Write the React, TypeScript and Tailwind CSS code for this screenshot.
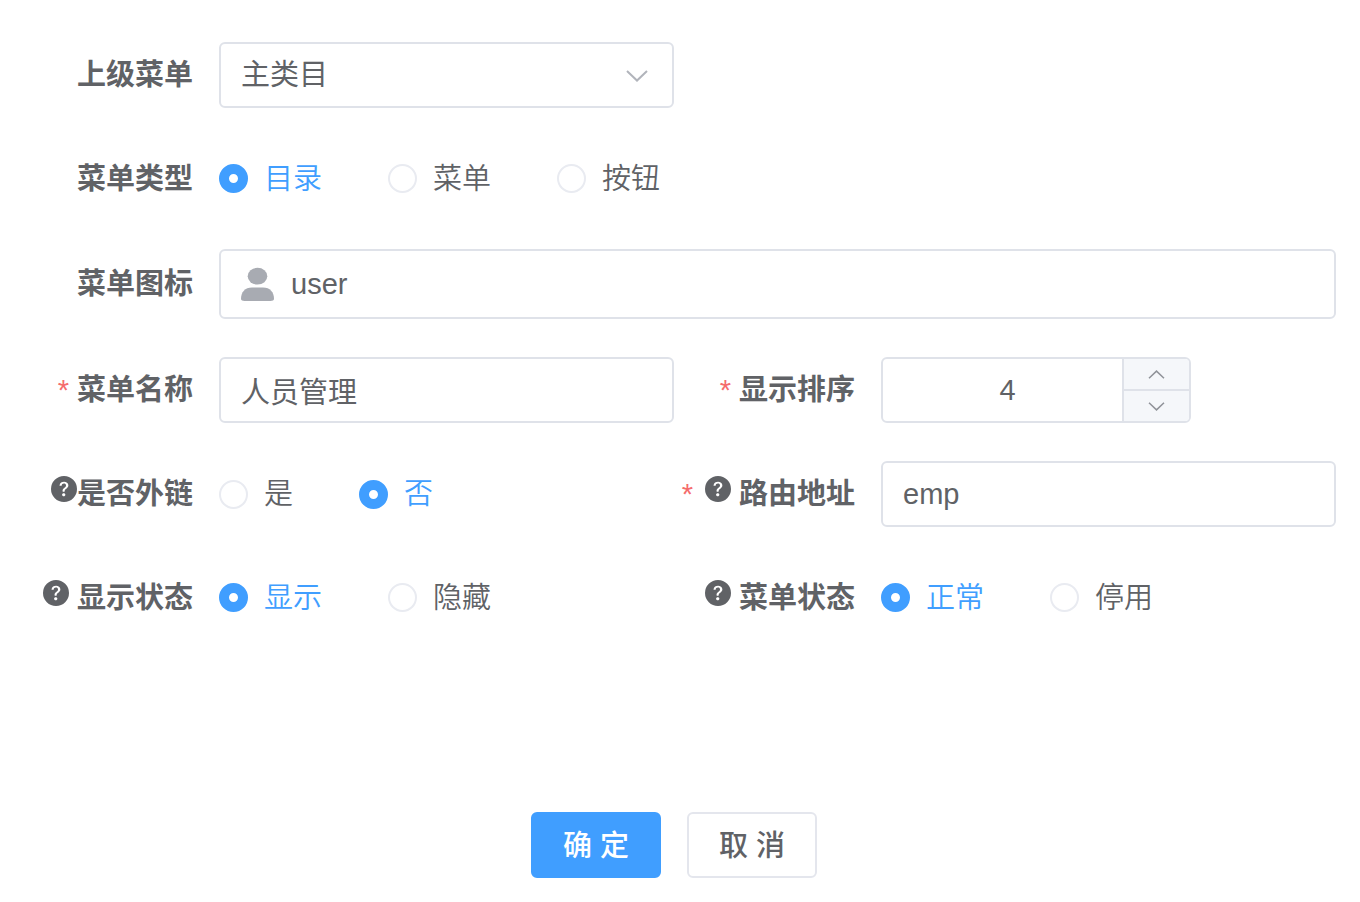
import React, { useState } from "react";

import { clsx } from "clsx";
import { BsQuestionCircleFill } from "react-icons/bs";

const inputClass =
  "h-[66px] w-full rounded-md border-2 border-[#dfe2e9] bg-white px-5 text-[29px] text-[#606266] outline-none focus:border-[#409eff]";

function Chevron({ up, className }: { up?: boolean; className?: string }) {
  return (
    <svg viewBox="0 0 22 12" fill="none" stroke="currentColor" className={className} aria-hidden="true">
      <path d={up ? "M1 11 L11 1.5 L21 11" : "M1 1 L11 10.5 L21 1"} strokeWidth="2" />
    </svg>
  );
}

function UserIcon() {
  return (
    <svg viewBox="0 0 34 34" fill="#a8abb2" className="h-[34px] w-[34px] shrink-0" aria-hidden="true">
      <ellipse cx="16.5" cy="9.2" rx="9.8" ry="8.4" />
      <path d="M0 32 C0 25 4 20.4 11 20.4 H22 C29 20.4 33 25 33 32 C33 33.2 31.5 34 29.5 34 H3.5 C1.5 34 0 33.2 0 32 Z" />
    </svg>
  );
}

type ItemProps = {
  label: string;
  htmlFor?: string;
  required?: boolean;
  help?: boolean;
  tight?: boolean;
  wide?: boolean;
  children: React.ReactNode;
};

function FormItem({ label, htmlFor, required, help, tight, wide, children }: ItemProps) {
  const Label = htmlFor ? "label" : "div";
  return (
    <div className={clsx("flex items-center", wide && "col-span-2")}>
      <Label
        htmlFor={htmlFor}
        className="flex w-[207px] shrink-0 items-center justify-end pr-[26px] font-bold whitespace-nowrap"
      >
        {required && <span className="mr-2 font-normal text-[#f56c6c]">*</span>}
        {help && (
          <BsQuestionCircleFill
            className={clsx("mb-2.5 h-[26px] w-[26px] shrink-0", required && "ml-1", !tight && "mr-2")}
          />
        )}
        <span>{label}</span>
      </Label>
      <div className="min-w-0 flex-1">{children}</div>
    </div>
  );
}

type RadioProps = {
  name: string;
  label: string;
  options: string[];
  defaultValue: string;
};

function RadioGroup({ name, label, options, defaultValue }: RadioProps) {
  const [value, setValue] = useState(defaultValue);

  return (
    <div role="radiogroup" aria-label={label} className="flex h-[65px] items-center gap-[66px] font-[350]">
      {options.map((option) => (
        <label
          key={option}
          className={clsx(
            "flex cursor-pointer items-center gap-4 whitespace-nowrap",
            value === option && "text-[#409eff]"
          )}
        >
          <input
            type="radio"
            name={name}
            value={option}
            checked={value === option}
            onChange={() => setValue(option)}
            className="h-[29px] w-[29px] shrink-0 appearance-none rounded-full border-2 border-[#e9ebf1] bg-white checked:border-10 checked:border-[#409eff]"
          />
          {option}
        </label>
      ))}
    </div>
  );
}

export default function App() {
  const [menuName, setMenuName] = useState("人员管理");
  const [icon, setIcon] = useState("user");
  const [path, setPath] = useState("emp");
  const [sort, setSort] = useState(4);

  return (
    <form
      className="pt-[42px] pr-6 pb-6 pl-3 font-['Liberation_Sans','Noto_Sans_CJK_SC',sans-serif] text-[29px] leading-10 text-[#606266]"
      onSubmit={(e) => e.preventDefault()}
    >
      <div className="grid grid-cols-2 gap-y-[38px]">
        <FormItem label="上级菜单" htmlFor="parent">
          <div className="relative">
            <select id="parent" className={clsx(inputClass, "appearance-none")}>
              <option>主类目</option>
            </select>
            <Chevron className="pointer-events-none absolute top-7 right-[26px] h-3 w-[22px] text-[#b1b4bb]" />
          </div>
        </FormItem>

        <FormItem label="菜单类型" wide>
          <RadioGroup name="type" label="菜单类型" options={["目录", "菜单", "按钮"]} defaultValue="目录" />
        </FormItem>

        <FormItem label="菜单图标" htmlFor="icon" wide>
          <div className="flex h-[70px] items-center gap-4 rounded-md border-2 border-[#dfe2e9] px-5">
            <UserIcon />
            <input
              id="icon"
              type="text"
              value={icon}
              onChange={(e) => setIcon(e.target.value)}
              className="min-w-0 flex-1 outline-none"
            />
          </div>
        </FormItem>

        <FormItem label="菜单名称" htmlFor="name" required>
          <input
            id="name"
            type="text"
            value={menuName}
            onChange={(e) => setMenuName(e.target.value)}
            className={inputClass}
          />
        </FormItem>

        <FormItem label="显示排序" htmlFor="sort" required>
          <div className="flex h-[66px] w-[310px] overflow-hidden rounded-md border-2 border-[#dfe2e9]">
            <input
              id="sort"
              type="number"
              value={sort}
              onChange={(e) => setSort(Number(e.target.value))}
              className="min-w-0 flex-1 appearance-none pl-2.5 text-center outline-none [&::-webkit-inner-spin-button]:appearance-none"
            />
            <div className="flex w-[67px] flex-col border-l-2 border-[#dfe2e9] bg-[#f5f7fa] text-[#909399]">
              <button
                type="button"
                aria-label="增加"
                onClick={() => setSort(sort + 1)}
                className="flex flex-1 items-center justify-center border-b-2 border-[#dfe2e9]"
              >
                <Chevron up className="h-[9px] w-[17px]" />
              </button>
              <button
                type="button"
                aria-label="减少"
                onClick={() => setSort(sort - 1)}
                className="flex flex-1 items-center justify-center"
              >
                <Chevron className="h-[9px] w-[17px]" />
              </button>
            </div>
          </div>
        </FormItem>

        <FormItem label="是否外链" help tight>
          <RadioGroup name="frame" label="是否外链" options={["是", "否"]} defaultValue="否" />
        </FormItem>

        <FormItem label="路由地址" htmlFor="path" required help>
          <input
            id="path"
            type="text"
            value={path}
            onChange={(e) => setPath(e.target.value)}
            className={inputClass}
          />
        </FormItem>

        <FormItem label="显示状态" help>
          <RadioGroup name="visible" label="显示状态" options={["显示", "隐藏"]} defaultValue="显示" />
        </FormItem>

        <FormItem label="菜单状态" help>
          <RadioGroup name="status" label="菜单状态" options={["正常", "停用"]} defaultValue="正常" />
        </FormItem>
      </div>

      <div className="mt-[182px] flex justify-center gap-[26px]">
        <button
          type="submit"
          className="h-[66px] w-[130px] rounded-md border-2 border-[#409eff] bg-[#409eff] pt-0.5 font-medium text-white"
        >
          确 定
        </button>
        <button
          type="button"
          className="h-[66px] w-[130px] rounded-md border-2 border-[#e4e6ed] bg-white pt-0.5 font-medium"
        >
          取 消
        </button>
      </div>
    </form>
  );
}
